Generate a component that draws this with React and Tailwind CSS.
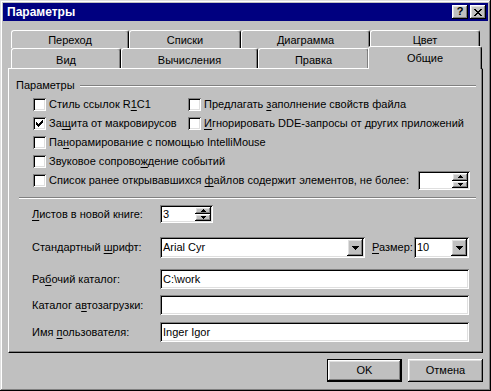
import React from "react";

const raised = "shadow-[inset_-1px_-1px_#000,inset_1px_1px_#fff,inset_-2px_-2px_#808080,inset_2px_2px_#dfdfdf]";
const sunken = "shadow-[inset_1px_1px_#808080,inset_-1px_-1px_#fff,inset_2px_2px_#000,inset_-2px_-2px_#dfdfdf]";

const CHECK = ["......#", ".....##", "#...###", "##.###.", "#####..", ".###...", "..#...."];
const CLOSE = ["##....##", ".##..##.", "..####..", "...##...", "..####..", ".##..##.", "##....##"];
const DOWN = ["#######", ".#####.", "..###..", "...#..."];
const UP_S = ["..#..", ".###.", "#####"];
const DOWN_S = ["#####", ".###.", "..#.."];

// tiny pixel drawing for win98 glyphs
const Pixels = ({ rows }) => (
  <svg width={rows[0].length} height={rows.length} shapeRendering="crispEdges" className="block">
    {rows.flatMap((r, y) =>
      [...r].map((c, x) => (c === "#" ? <rect key={`${x}-${y}`} x={x} y={y} width="1" height="1" fill="#000" /> : null))
    )}
  </svg>
);

const U = ({ children }) => <span className="underline underline-offset-[2px]">{children}</span>;

const Check = ({ checked }) => (
  <div className={`w-[13px] h-[13px] shrink-0 bg-white ${sunken} flex items-center justify-center`}>
    {checked && <Pixels rows={CHECK} />}
  </div>
);

const Opt = ({ checked, children, className = "" }) => (
  <div className={`flex items-center gap-[3px] ${className}`}>
    <Check checked={checked} />
    <span className="whitespace-nowrap">{children}</span>
  </div>
);

const Spin = ({ value = "", className = "" }) => (
  <div className={`bg-white ${sunken} flex p-[2px] ${className}`}>
    <span className="flex-1 px-[1px] flex items-center">{value}</span>
    <div className="w-[16px] flex flex-col">
      <div className={`flex-1 bg-[#c0c0c0] ${raised} flex items-center justify-center`}>
        <Pixels rows={UP_S} />
      </div>
      <div className={`flex-1 bg-[#c0c0c0] ${raised} flex items-center justify-center`}>
        <Pixels rows={DOWN_S} />
      </div>
    </div>
  </div>
);

const Combo = ({ value, className = "" }) => (
  <div className={`bg-white ${sunken} flex p-[2px] ${className}`}>
    <span className="flex-1 px-[1px] flex items-center">{value}</span>
    <div className={`w-[16px] bg-[#c0c0c0] ${raised} flex items-center justify-center`}>
      <Pixels rows={DOWN} />
    </div>
  </div>
);

const Field = ({ value = "" }) => (
  <div className={`w-[309px] h-[20px] bg-white ${sunken} px-[3px] flex items-center`}>{value}</div>
);

const tabBase =
  "bg-[#c0c0c0] border-t border-l border-r border-t-white border-l-white border-r-black rounded-t-[3px] shadow-[inset_-1px_0_#808080] flex justify-center";

const row1 = [
  ["Переход", "w-[118px]"],
  ["Списки", "w-[112px]"],
  ["Диаграмма", "w-[129px]"],
  ["Цвет", "w-[110px]"],
];
const row2 = [
  ["Вид", "w-[110px]"],
  ["Вычисления", "w-[137px]"],
  ["Правка", "w-[111px]"],
];

const LabelRow = ({ label, className = "", children }) => (
  <div className={`flex items-center pl-[23px] ${className}`}>
    <span className="w-[128px] whitespace-nowrap">{label}</span>
    {children}
  </div>
);

export default function App() {
  return (
    <div className="w-[491px] h-[391px] bg-[#c0c0c0] p-[3px] flex flex-col shadow-[inset_-1px_-1px_#000,inset_1px_1px_#dfdfdf,inset_-2px_-2px_#808080,inset_2px_2px_#fff] font-['Liberation_Sans',Arial,sans-serif] text-[11px] leading-none text-black select-none">
      {/* title bar */}
      <div className="h-[18px] bg-[#000080] flex items-center pl-[4px] pr-[2px]">
        <span className="flex-1 text-white font-bold text-[12px]">Параметры</span>
        <div className="flex gap-[2px]">
          <div className={`w-[16px] h-[14px] bg-[#c0c0c0] ${raised} flex items-center justify-center font-bold text-[11px] pb-[1px]`}>?</div>
          <div className={`w-[16px] h-[14px] bg-[#c0c0c0] ${raised} flex items-center justify-center`}>
            <Pixels rows={CLOSE} />
          </div>
        </div>
      </div>

      {/* tabs */}
      <div className="mt-[9px] ml-[8px] flex h-[18px]">
        {row1.map(([t, w]) => (
          <div key={t} className={`${tabBase} ${w} pt-[4px]`}>{t}</div>
        ))}
      </div>
      <div className="ml-[8px] flex h-[20px] items-end">
        {row2.map(([t, w]) => (
          <div key={t} className={`${tabBase} ${w} h-[20px] pt-[6px]`}>{t}</div>
        ))}
        <div className={`${tabBase} w-[114px] h-[23px] -ml-[1px] -mb-[1px] relative z-10 pt-[6px]`}>Общие</div>
      </div>

      {/* panel */}
      <div className="ml-[5px] w-[475px] h-[285px] border border-t-white border-l-white border-r-black border-b-black shadow-[inset_-1px_-1px_#808080] flex flex-col">
        <div className="mt-[7px] h-[19px] flex items-center pl-[7px] pr-[6px]">
          <span>Параметры</span>
          <div className="flex-1 ml-[5px] h-[2px] border-t border-t-[#808080] border-b border-b-white" />
        </div>

        <div className="pl-[24px] flex flex-col">
          <div className="h-[19px] flex items-center">
            <Opt className="w-[155px]">
              Стиль ссылок R<U>1</U>C1
            </Opt>
            <Opt>
              Предлагать <U>з</U>аполнение свойств файла
            </Opt>
          </div>
          <div className="h-[19px] flex items-center">
            <Opt checked className="w-[155px]">
              За<U>щ</U>ита от макровирусов
            </Opt>
            <Opt>
              <U>И</U>гнорировать DDE-запросы от других приложений
            </Opt>
          </div>
          <div className="h-[19px] flex items-center">
            <Opt>
              Па<U>н</U>орамирование с помощью IntelliMouse
            </Opt>
          </div>
          <div className="h-[19px] flex items-center">
            <Opt>
              Звуковое сопрово<U>ж</U>дение событий
            </Opt>
          </div>
          <div className="h-[19px] flex items-center">
            <Opt>
              Список ранее открывавшихся <U>ф</U>айлов содержит элементов, не более:
            </Opt>
            <Spin className="ml-auto mr-[12px] w-[52px] h-[19px]" />
          </div>
        </div>

        <div className="mt-[7px] ml-[10px] mr-[6px] h-[2px] border-t border-t-[#808080] border-b border-b-white" />

        <LabelRow
          className="mt-[6px] h-[18px]"
          label={
            <>
              <U>Л</U>истов в новой книге:
            </>
          }
        >
          <Spin value="3" className="w-[53px] h-[18px]" />
        </LabelRow>

        <LabelRow
          className="mt-[14px] h-[21px]"
          label={
            <>
              Стандартный <U>ш</U>рифт:
            </>
          }
        >
          <Combo value="Arial Cyr" className="w-[205px] h-[21px]" />
          <span className="ml-[7px] w-[42px]">
            <U>Р</U>азмер:
          </span>
          <Combo value="10" className="w-[55px] h-[21px]" />
        </LabelRow>

        <LabelRow
          className="mt-[11px] h-[20px]"
          label={
            <>
              Ра<U>б</U>очий каталог:
            </>
          }
        >
          <Field value="C:\work" />
        </LabelRow>

        <LabelRow
          className="mt-[6px] h-[20px]"
          label={
            <>
              Каталог а<U>в</U>тозагрузки:
            </>
          }
        >
          <Field />
        </LabelRow>

        <LabelRow
          className="mt-[7px] h-[20px]"
          label={
            <>
              Имя <U>п</U>ользователя:
            </>
          }
        >
          <Field value="Inger Igor" />
        </LabelRow>
      </div>

      {/* buttons */}
      <div className="mt-[6px] mr-[5px] flex justify-end gap-[6px]">
        <button className={`w-[75px] h-[23px] bg-[#c0c0c0] border border-black ${raised} flex items-center justify-center`}>
          OK
        </button>
        <button className={`w-[75px] h-[23px] bg-[#c0c0c0] ${raised} flex items-center justify-center`}>
          Отмена
        </button>
      </div>
    </div>
  );
}
